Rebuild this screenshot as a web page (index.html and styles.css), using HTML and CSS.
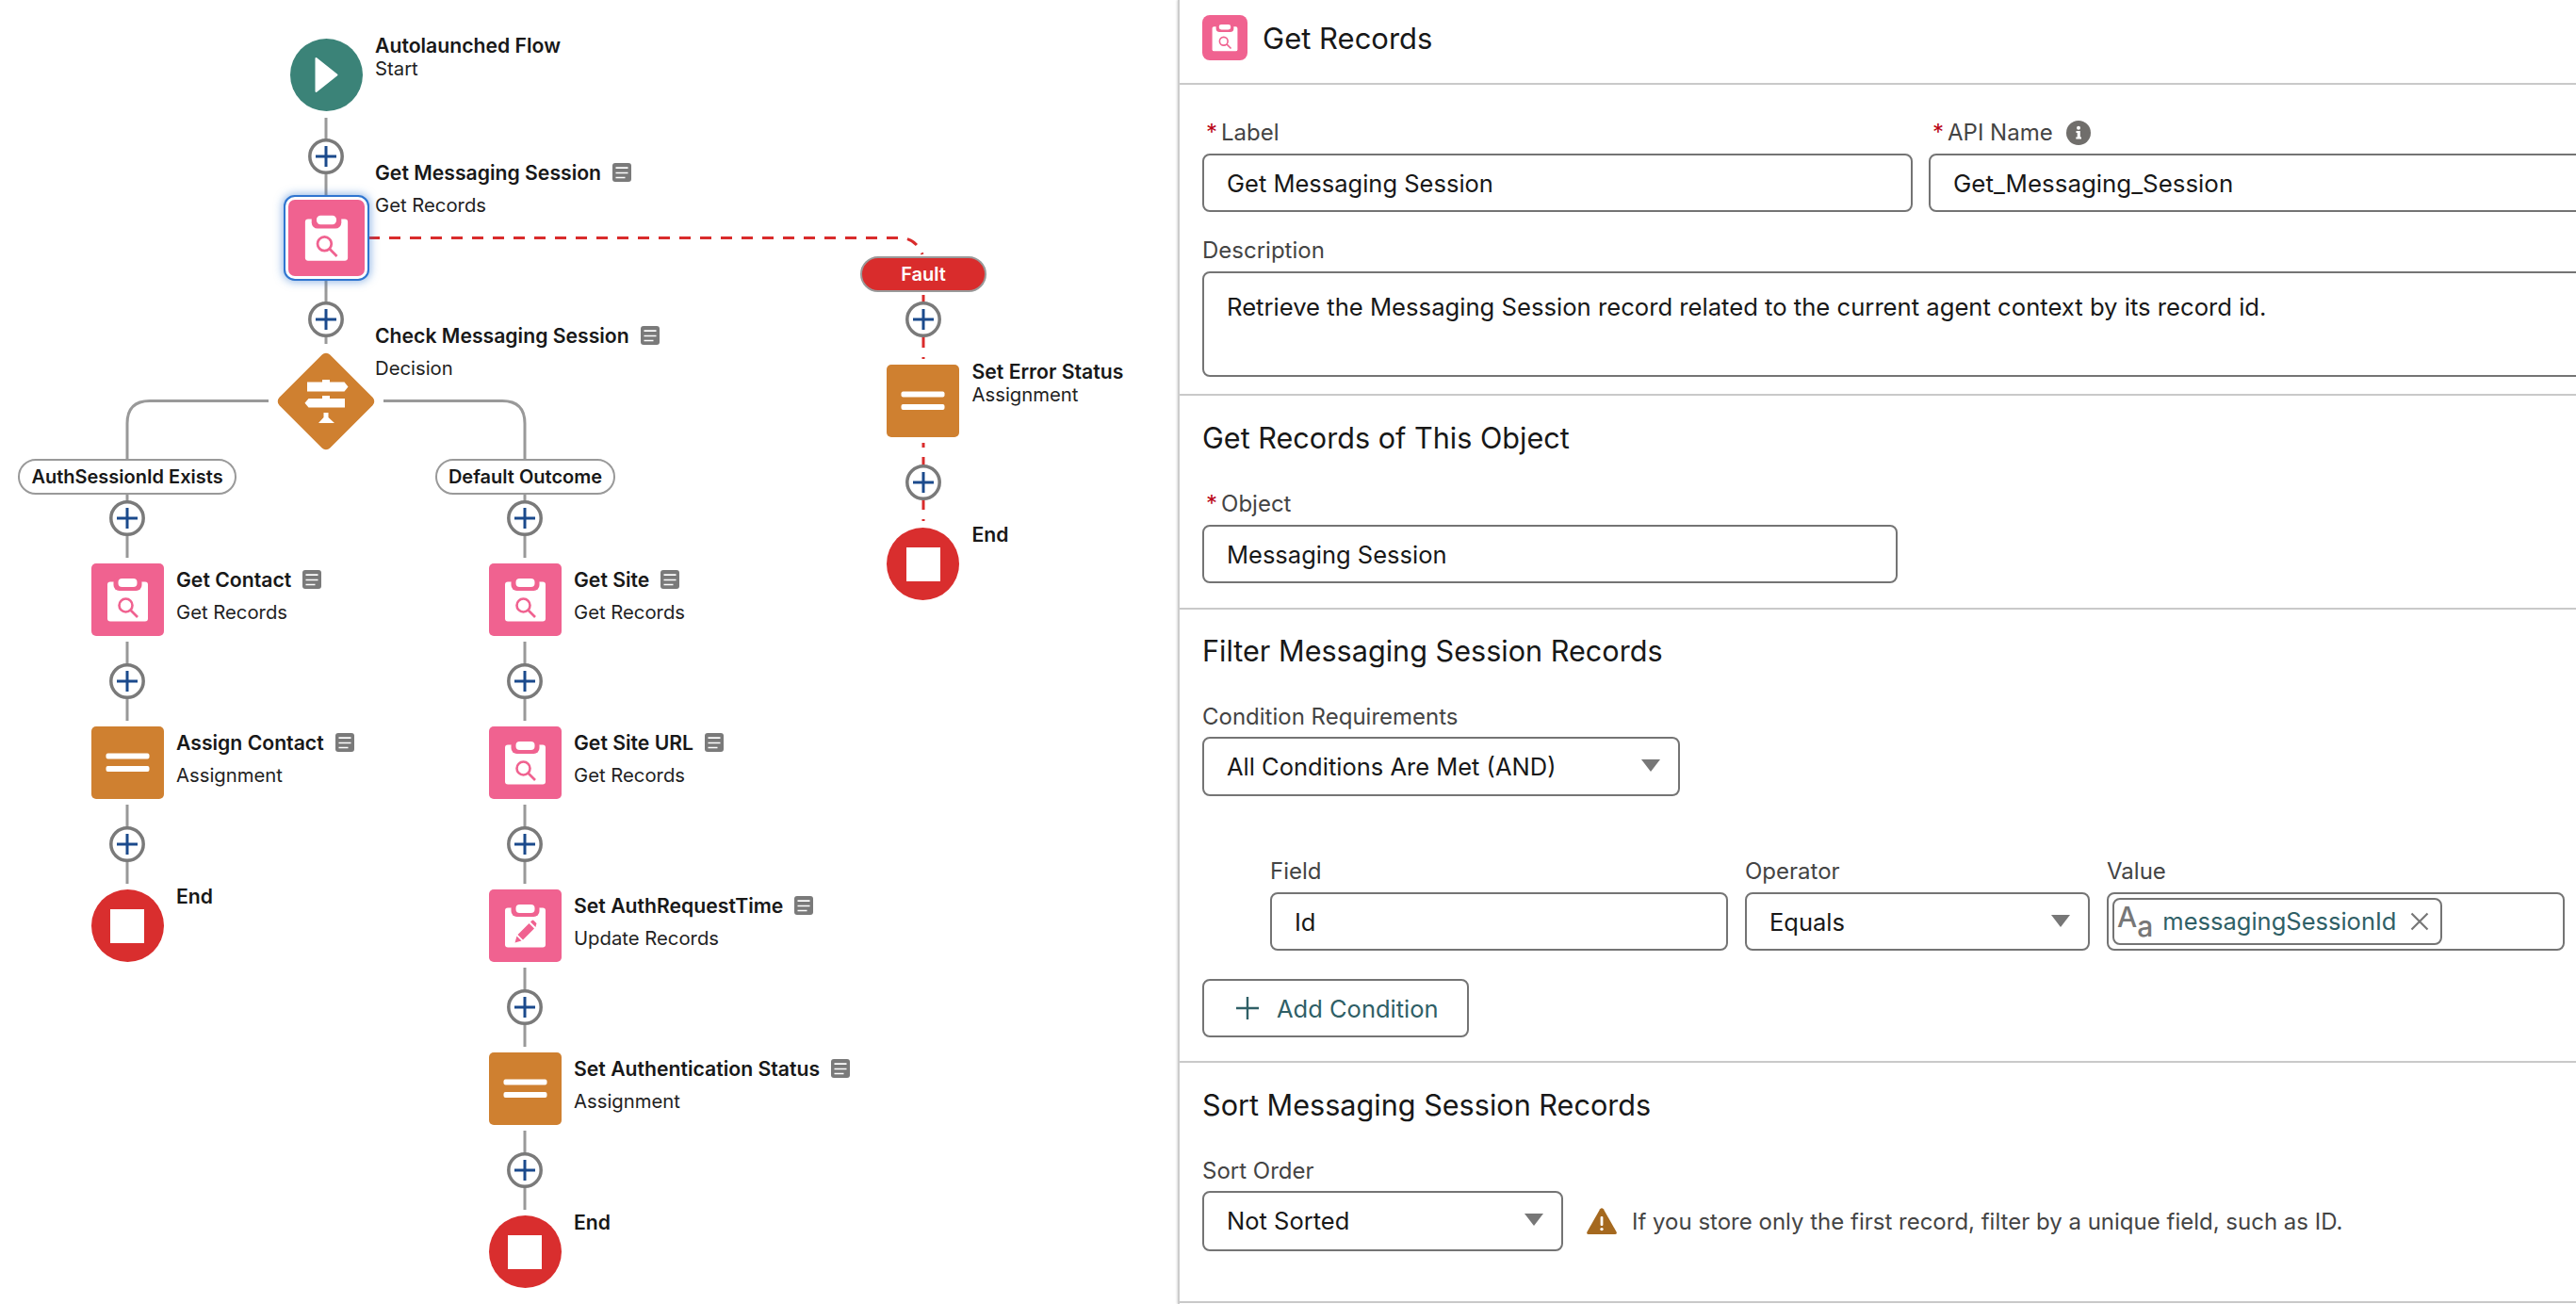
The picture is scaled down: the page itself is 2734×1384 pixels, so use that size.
FILE: index.html
```html
<!DOCTYPE html>
<html lang="en">
<head>
  <meta charset="UTF-8">
  <title>Flow Builder - Get Records</title>
  <link rel="stylesheet" href="styles.css">
</head>
<body>
  <svg class="defs" aria-hidden="true">
    <symbol id="i-get" viewBox="0 0 77 77">
      <rect x="17" y="19.5" width="43" height="42" rx="3" fill="#fff"/>
      <rect x="23.5" y="14" width="30" height="15" rx="6" fill="#f06290"/>
      <rect x="28.5" y="16" width="20" height="9" rx="4" fill="#fff"/>
      <circle cx="36.5" cy="44.5" r="7" fill="none" stroke="#f06290" stroke-width="2.6"/>
      <path d="M41.5 49.5L49 57" stroke="#f06290" stroke-width="2.6"/>
    </symbol>
    <symbol id="i-update" viewBox="0 0 77 77">
      <rect x="17" y="19.5" width="43" height="42" rx="3" fill="#fff"/>
      <rect x="23.5" y="14" width="30" height="15" rx="6" fill="#f06290"/>
      <rect x="28.5" y="16" width="20" height="9" rx="4" fill="#fff"/>
      <path d="M27.5 56.5L29.5 49.5L34.5 54.5ZM30.5 48L42.5 36L48 41.5L36 53.5ZM44 34.5L45.5 33Q46.5 32 47.5 33L50 35.5Q51 36.5 50 37.5L49.5 40Z" fill="#f06290"/>
    </symbol>
    <symbol id="i-assign" viewBox="0 0 77 77">
      <rect x="15.5" y="28.5" width="46" height="6" rx="2" fill="#fff"/>
      <rect x="15.5" y="42" width="46" height="6" rx="2" fill="#fff"/>
    </symbol>
    <symbol id="i-decision" viewBox="-52 -52 104 104">
      <rect x="-38" y="-38" width="76" height="76" rx="6" fill="#cf8030" transform="rotate(45)"/>
      <path d="M-20 -20.5H-4V-23H4V-20.5H19.5L23.5 -15.5L19.5 -10.5H-20ZM-18.5 -3H-4V-6H4V-3H20V6.5H-18.5L-22.5 1.7ZM-2.5 12H2.5V17L9 23H-8L-2.5 17Z" fill="#fff"/>
    </symbol>
    <symbol id="i-note" viewBox="0 0 20 20">
      <rect width="20" height="20" rx="3" fill="#7a7a7a"/>
      <path d="M3.5 5.2H16.5M3.5 10.5H16.5M3.5 15.5H13.5" stroke="#fff" stroke-width="1.7"/>
    </symbol>
    <symbol id="i-plus" viewBox="0 0 38 38">
      <circle cx="19" cy="19" r="17.2" fill="#fff" stroke="#7a7a7a" stroke-width="3.5"/>
      <path d="M8 19H30M19 8V30" stroke="#1b4a8c" stroke-width="3"/>
    </symbol>
    <symbol id="i-caret" viewBox="0 0 20 13">
      <path d="M0 0H20L10 13Z" fill="#777"/>
    </symbol>
  </svg>

  <div class="page">
    <div class="canvas">
      <!-- connectors -->
      <svg class="wires" width="1250" height="1384">
        <g class="wire">
          <path d="M346 125V208M346 297V365"/>
          <path d="M285 425.5H159Q135 425.5 135 449.5V487M407 425.5H533Q557 425.5 557 449.5V487"/>
          <path d="M135 524V592M135 681V765M135 854V938"/>
          <path d="M557 524V592M557 681V765M557 854V938M557 1027V1111M557 1200V1284"/>
        </g>
        <g class="wire-fault">
          <path d="M391 252.5H955Q972 252.5 979 270"/>
          <path d="M980 313V381"/>
          <path class="offset" d="M980 470V553"/>
        </g>
        <use href="#i-plus" x="327" y="147" width="38" height="38"/>
        <use href="#i-plus" x="327" y="320" width="38" height="38"/>
        <use href="#i-plus" x="116" y="531" width="38" height="38"/>
        <use href="#i-plus" x="116" y="704" width="38" height="38"/>
        <use href="#i-plus" x="116" y="877" width="38" height="38"/>
        <use href="#i-plus" x="538" y="531" width="38" height="38"/>
        <use href="#i-plus" x="538" y="704" width="38" height="38"/>
        <use href="#i-plus" x="538" y="877" width="38" height="38"/>
        <use href="#i-plus" x="538" y="1050" width="38" height="38"/>
        <use href="#i-plus" x="538" y="1223" width="38" height="38"/>
        <use href="#i-plus" x="961" y="320" width="38" height="38"/>
        <use href="#i-plus" x="961" y="493" width="38" height="38"/>
      </svg>

      <div class="pill pill-exists">AuthSessionId Exists</div>
      <div class="pill pill-default">Default Outcome</div>
      <div class="pill pill-fault">Fault</div>

      <div class="lane lane-main">
        <div class="row">
          <div class="node start">
            <svg width="77" height="77" viewBox="0 0 77 77"><path d="M27.5 21L49.5 38.5L27.5 56Z" fill="#fff" stroke="#fff" stroke-width="2" stroke-linejoin="round"/></svg>
          </div>
          <div class="label tight">
            <div class="title">Autolaunched Flow</div>
            <div class="sub">Start</div>
          </div>
        </div>
        <div class="row">
          <div class="node pink selected"><svg width="77" height="77"><use href="#i-get"/></svg></div>
          <div class="label raised">
            <div class="title">Get Messaging Session <svg class="note"><use href="#i-note"/></svg></div>
            <div class="sub">Get Records</div>
          </div>
        </div>
        <div class="row">
          <div class="node diamond"><svg width="104" height="104"><use href="#i-decision"/></svg></div>
          <div class="label raised">
            <div class="title">Check Messaging Session <svg class="note"><use href="#i-note"/></svg></div>
            <div class="sub">Decision</div>
          </div>
        </div>
      </div>

      <div class="lane lane-left">
        <div class="row">
          <div class="node pink"><svg width="77" height="77"><use href="#i-get"/></svg></div>
          <div class="label">
            <div class="title">Get Contact <svg class="note"><use href="#i-note"/></svg></div>
            <div class="sub">Get Records</div>
          </div>
        </div>
        <div class="row">
          <div class="node orange"><svg width="77" height="77"><use href="#i-assign"/></svg></div>
          <div class="label">
            <div class="title">Assign Contact <svg class="note"><use href="#i-note"/></svg></div>
            <div class="sub">Assignment</div>
          </div>
        </div>
        <div class="row">
          <div class="node end"><span class="stop"></span></div>
          <div class="label tight"><div class="title">End</div></div>
        </div>
      </div>

      <div class="lane lane-mid">
        <div class="row">
          <div class="node pink"><svg width="77" height="77"><use href="#i-get"/></svg></div>
          <div class="label">
            <div class="title">Get Site <svg class="note"><use href="#i-note"/></svg></div>
            <div class="sub">Get Records</div>
          </div>
        </div>
        <div class="row">
          <div class="node pink"><svg width="77" height="77"><use href="#i-get"/></svg></div>
          <div class="label">
            <div class="title">Get Site URL <svg class="note"><use href="#i-note"/></svg></div>
            <div class="sub">Get Records</div>
          </div>
        </div>
        <div class="row">
          <div class="node pink"><svg width="77" height="77"><use href="#i-update"/></svg></div>
          <div class="label">
            <div class="title">Set AuthRequestTime <svg class="note"><use href="#i-note"/></svg></div>
            <div class="sub">Update Records</div>
          </div>
        </div>
        <div class="row">
          <div class="node orange"><svg width="77" height="77"><use href="#i-assign"/></svg></div>
          <div class="label">
            <div class="title">Set Authentication Status <svg class="note"><use href="#i-note"/></svg></div>
            <div class="sub">Assignment</div>
          </div>
        </div>
        <div class="row">
          <div class="node end"><span class="stop"></span></div>
          <div class="label tight"><div class="title">End</div></div>
        </div>
      </div>

      <div class="lane lane-fault">
        <div class="row">
          <div class="node orange"><svg width="77" height="77"><use href="#i-assign"/></svg></div>
          <div class="label tight">
            <div class="title">Set Error Status</div>
            <div class="sub">Assignment</div>
          </div>
        </div>
        <div class="row">
          <div class="node end"><span class="stop"></span></div>
          <div class="label tight"><div class="title">End</div></div>
        </div>
      </div>
    </div>

    <div class="panel">
      <div class="panel-header">
        <div class="header-icon">
          <svg width="48" height="48" viewBox="0 0 77 77"><use href="#i-get"/></svg>
        </div>
        <h2 class="panel-title">Get Records</h2>
      </div>

      <div class="section section-props">
        <div class="field-row">
          <div class="field field-label">
            <div class="field-name"><span class="req">*</span>Label</div>
            <div class="input">Get Messaging Session</div>
          </div>
          <div class="field field-api">
            <div class="field-name"><span class="req">*</span>API Name
              <svg class="info" width="26" height="26" viewBox="0 0 26 26">
                <circle cx="13" cy="13" r="13" fill="#706e6b"/>
                <path d="M10.5 11H14.8V17.5H16V19.5H10.3V17.5H11.7V13H10.5Z" fill="#fff"/>
                <circle cx="13" cy="7.8" r="2" fill="#fff"/>
              </svg>
            </div>
            <div class="input">Get_Messaging_Session</div>
          </div>
        </div>
        <div class="field field-desc">
          <div class="field-name">Description</div>
          <div class="input textarea">Retrieve the Messaging Session record related to the current agent context by its record id.</div>
        </div>
      </div>

      <div class="section section-object">
        <h3 class="section-title">Get Records of This Object</h3>
        <div class="field field-object">
          <div class="field-name"><span class="req">*</span>Object</div>
          <div class="input">Messaging Session</div>
        </div>
      </div>

      <div class="section section-filter">
        <h3 class="section-title">Filter Messaging Session Records</h3>
        <div class="field field-cond">
          <div class="field-name">Condition Requirements</div>
          <div class="input select">All Conditions Are Met (AND)<svg class="caret"><use href="#i-caret"/></svg></div>
        </div>
        <div class="cond-row">
          <div class="field">
            <div class="field-name">Field</div>
            <div class="input">Id</div>
          </div>
          <div class="field">
            <div class="field-name">Operator</div>
            <div class="input select">Equals<svg class="caret"><use href="#i-caret"/></svg></div>
          </div>
          <div class="field">
            <div class="field-name">Value</div>
            <div class="input input-value">
              <div class="chip">
                <span class="aa"><span class="aa-big">A</span><span class="aa-small">a</span></span>
                <span class="chip-text">messagingSessionId</span>
                <svg class="chip-x" width="20" height="20" viewBox="0 0 20 20"><path d="M1.5 1.5L18.5 18.5M18.5 1.5L1.5 18.5" stroke="#777" stroke-width="2.2"/></svg>
              </div>
            </div>
          </div>
        </div>
        <button class="add-btn">
          <svg width="24" height="24" viewBox="0 0 24 24"><path d="M0 12H24M12 0V24" stroke="#2f5f66" stroke-width="2.4"/></svg>
          Add Condition
        </button>
      </div>

      <div class="section section-sort">
        <h3 class="section-title">Sort Messaging Session Records</h3>
        <div class="field">
          <div class="field-name">Sort Order</div>
          <div class="sort-row">
            <div class="input select">Not Sorted<svg class="caret"><use href="#i-caret"/></svg></div>
            <svg class="warn" width="32" height="28" viewBox="0 0 32 28">
              <path d="M14.2 1.2Q16 -0.6 17.8 1.2L31.6 25.6Q32.4 28 30 28H2Q-0.4 28 0.4 25.6Z" fill="#a5691f"/>
              <rect x="14.6" y="9" width="2.8" height="10" rx="1" fill="#fff"/>
              <circle cx="16" cy="22.6" r="1.7" fill="#fff"/>
            </svg>
            <span class="warn-text">If you store only the first record, filter by a unique field, such as ID.</span>
          </div>
        </div>
      </div>
    </div>
  </div>
</body>
</html>
```

FILE: styles.css
```css
* {
  box-sizing: border-box;
}
html, body {
  margin: 0;
  height: 100%;
  overflow: hidden;
  background: #fff;
}
body {
  font-family: Inter, "Noto Sans", sans-serif;
  color: #181818;
}
.defs {
  position: absolute;
  width: 0;
  height: 0;
}
.page {
  display: flex;
  height: 1384px;
}

/* flow canvas */
.canvas {
  position: relative;
  flex: 0 0 1250px;
  height: 1384px;
}
.wires {
  position: absolute;
  left: 0;
  top: 0;
}
.wire path {
  fill: none;
  stroke: #999;
  stroke-width: 3;
}
.wire-fault path {
  fill: none;
  stroke: #d92c2c;
  stroke-width: 3;
  stroke-dasharray: 12 10;
}
.wire-fault .offset {
  stroke-dashoffset: 7;
}
.pill {
  position: absolute;
  top: 487px;
  height: 38px;
  border: 2px solid #999;
  border-radius: 19px;
  background: #fff;
  font-size: 20px;
  font-weight: 600;
  line-height: 34px;
  text-align: center;
  white-space: nowrap;
}
.pill-exists {
  left: 19px;
  width: 232px;
}
.pill-default {
  left: 462px;
  width: 191px;
}
.pill-fault {
  left: 913px;
  top: 272px;
  width: 134px;
  background: #d92c2c;
  color: #fff;
}
.lane {
  position: absolute;
  display: flex;
  flex-direction: column;
  gap: 96px;
}
.lane-main {
  left: 307.5px;
  top: 41px;
}
.lane-left {
  left: 96.5px;
  top: 598px;
}
.lane-mid {
  left: 518.5px;
  top: 598px;
}
.lane-fault {
  left: 941px;
  top: 387px;
}
.row {
  display: flex;
  gap: 13.5px;
  height: 77px;
}
.node {
  flex: 0 0 77px;
  height: 77px;
  border-radius: 5px;
}
.node svg {
  display: block;
}
.pink {
  background: #f06290;
}
.orange {
  background: #cf8030;
}
.start {
  background: #3b8378;
  border-radius: 50%;
}
.end {
  display: flex;
  align-items: center;
  justify-content: center;
  background: #d92e2e;
  border-radius: 50%;
}
.stop {
  width: 36px;
  height: 36px;
  background: #fff;
}
.selected {
  box-shadow: 0 0 0 2px #f06290, 0 0 0 5px #fff, 0 0 0 7px #2f75d0, 0 0 10px 8px rgba(47, 117, 208, 0.55);
}
.selected svg {
  width: 81px;
  height: 81px;
  margin: -2px;
}
.diamond svg {
  margin: -13.5px;
}
.label {
  margin-top: 5px;
  white-space: nowrap;
}
.label.tight {
  margin-top: -5px;
}
.label.raised {
  margin-top: -43px;
}
.title {
  display: flex;
  align-items: center;
  gap: 12px;
  font-size: 21.2px;
  font-weight: 600;
  line-height: 24px;
}
.sub {
  margin-top: 11px;
  font-size: 20.3px;
  line-height: 24px;
  color: #222;
}
.tight .sub {
  margin-top: 1px;
}
.note {
  flex: 0 0 20px;
  width: 20px;
  height: 20px;
}

/* properties panel */
.panel {
  flex: 1;
  min-width: 0;
  overflow: hidden;
  border-left: 2px solid #ccc;
  box-shadow: -1px 0 2px #ddd;
  background: #fff;
  color: #181818;
}
.panel-header {
  display: flex;
  align-items: center;
  gap: 16px;
  height: 90px;
  padding: 0 24px 10px;
  border-bottom: 2px solid #c9c9c9;
}
.header-icon {
  width: 48px;
  height: 48px;
  margin-top: 2px;
  border-radius: 8px;
  background: #f06290;
}
.header-icon svg {
  display: block;
}
.panel-title, .section-title {
  margin: 0;
  font-size: 30.6px;
  font-weight: 400;
  line-height: 36px;
}
.panel-title {
  margin-top: 3px;
  font-size: 31px;
}
.section {
  padding: 27px 0 26px 24px;
  border-bottom: 2px solid #c9c9c9;
}
.section-props {
  height: 330px;
  padding-top: 36px;
}
.section-object {
  height: 227px;
}
.section-filter {
  height: 481px;
  padding-top: 26px;
}
.section-sort {
  height: 255px;
}
.section-title + .field {
  margin-top: 37px;
}
.section-sort .section-title + .field {
  margin-top: 38px;
}
.field-row {
  display: flex;
  gap: 17px;
}
.field-label {
  flex: 0 0 754px;
}
.field-api {
  flex: 0 0 800px;
}
.field-desc {
  margin-top: 27px;
  width: 1600px;
}
.field-object {
  width: 738px;
}
.field-cond {
  width: 507px;
}
.field-name {
  display: flex;
  align-items: center;
  height: 28px;
  margin-bottom: 8px;
  font-size: 24px;
  line-height: 28px;
  color: #444;
}
.field-row .field-name, .field-object .field-name {
  margin-bottom: 9px;
}
.field-row .field-name, .field-object .field-name, .field-cond .field-name {
  padding-top: 2px;
}
.section-sort .field-name {
  margin-bottom: 7px;
}
.req {
  margin: 0 4px 0 4px;
  color: #ba0517;
}
.info {
  margin-left: 14px;
}
.input {
  position: relative;
  height: 62px;
  padding: 0 24px;
  border: 2px solid #747474;
  border-radius: 8px;
  background: #fff;
  font-size: 25.5px;
  line-height: 60px;
  white-space: nowrap;
}
.field-cond .input {
  height: 63px;
}
.section-sort .input {
  height: 64px;
}
.field-api .input {
  font-size: 25.9px;
}
.textarea {
  height: 112px;
  padding-top: 6px;
  font-size: 25.65px;
}
.caret {
  position: absolute;
  right: 19px;
  top: 22px;
  width: 20px;
  height: 13px;
}
.cond-row {
  display: grid;
  grid-template-columns: 486px 366px 486px;
  gap: 18px;
  margin-top: 66px;
  padding-left: 72px;
}
.input-value {
  display: flex;
  align-items: flex-start;
  padding: 4px;
}
.chip {
  display: flex;
  align-items: center;
  height: 50px;
  padding: 0 12px 0 3px;
  border: 2px solid #747474;
  border-radius: 8px;
  color: #2f5f66;
  line-height: 46px;
}
.aa {
  display: flex;
  flex: 0 0 38px;
  height: 44px;
  color: #777;
  font-size: 30px;
  font-weight: 500;
  line-height: 34px;
}
.aa-big {
  align-self: flex-start;
}
.aa-small {
  align-self: flex-end;
}
.chip-text {
  margin-left: 10px;
}
.chip-x {
  margin-left: 15px;
}
.add-btn {
  display: flex;
  align-items: center;
  gap: 19px;
  width: 283px;
  height: 62px;
  margin-top: 30px;
  padding: 0 0 0 34px;
  border: 2px solid #747474;
  border-radius: 8px;
  background: #fff;
  font-family: inherit;
  font-size: 25.5px;
  color: #2f5f66;
}
.sort-row {
  display: flex;
  align-items: center;
  width: 1300px;
}
.sort-row .input {
  flex: 0 0 383px;
}
.warn {
  margin-left: 25px;
}
.warn-text {
  margin-left: 16px;
  font-size: 24px;
  color: #444;
}
```
